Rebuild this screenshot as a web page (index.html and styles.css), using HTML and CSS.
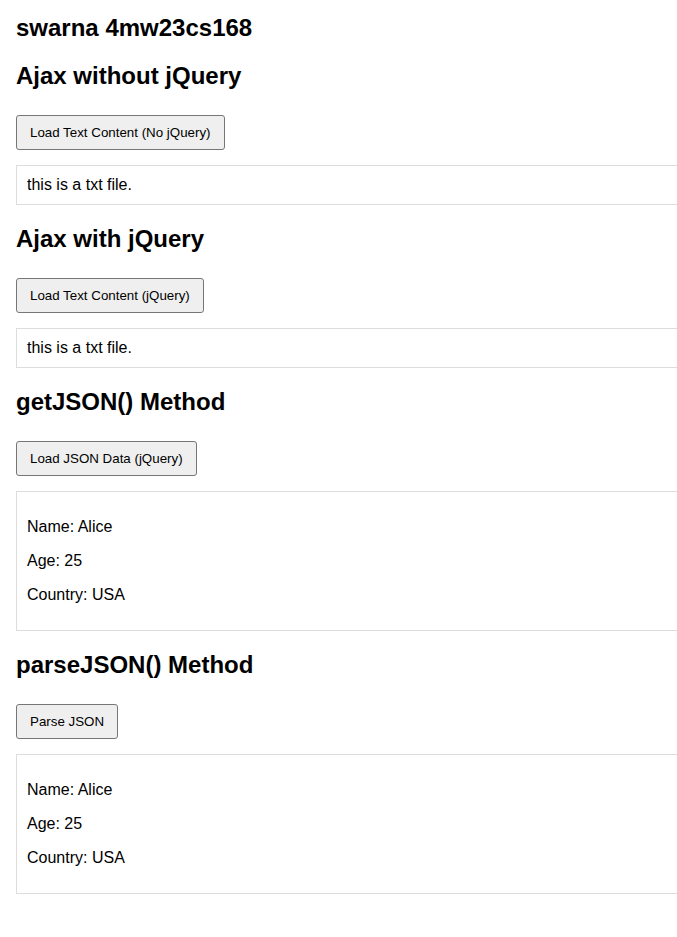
FILE: index.html
```html
<!DOCTYPE html>
<html lang="en">
<head>
<meta charset="utf-8">
<title>Ajax demo</title>
<link rel="stylesheet" href="styles.css">
</head>
<body>
  <h2 class="heading title">swarna 4mw23cs168</h2>

  <h2 class="heading">Ajax without jQuery</h2>
  <div class="actions"><button class="btn" type="button">Load Text Content (No jQuery)</button></div>
  <div class="output">this is a txt file.</div>

  <h2 class="heading">Ajax with jQuery</h2>
  <div class="actions"><button class="btn" type="button">Load Text Content (jQuery)</button></div>
  <div class="output">this is a txt file.</div>

  <h2 class="heading">getJSON() Method</h2>
  <div class="actions"><button class="btn" type="button">Load JSON Data (jQuery)</button></div>
  <div class="output">
    <p class="line">Name: Alice</p>
    <p class="line">Age: 25</p>
    <p class="line">Country: USA</p>
  </div>

  <h2 class="heading">parseJSON() Method</h2>
  <div class="actions"><button class="btn" type="button">Parse JSON</button></div>
  <div class="output">
    <p class="line">Name: Alice</p>
    <p class="line">Age: 25</p>
    <p class="line">Country: USA</p>
  </div>
</body>
</html>
```

FILE: styles.css
```css
html, body {
  overflow-x: hidden;
}

body {
  margin: 0;
  padding: 0 16px 20px;
  font-family: "Liberation Sans", Arial, sans-serif;
  font-size: 16px;
  line-height: 18px;
  color: #000;
  background: #fff;
}

.heading {
  font-size: 24px;
  font-weight: bold;
  line-height: 28px;
  margin: 20px 0;
}

.title {
  margin-top: 14px;
}

.actions {
  display: flex;
  padding: 5px 0;
}

.btn {
  font-family: "Liberation Sans", Arial, sans-serif;
  font-size: 13.333px;
  line-height: 15px;
  color: #000;
  background: #efefef;
  border: 1px solid #767676;
  border-radius: 3px;
  padding: 9px 13px;
  margin: 0;
}

.output {
  width: 100%;
  margin: 10px 0;
  padding: 10px;
  border: 1px solid #ddd;
}

.line {
  margin: 16px 0;
}
```
